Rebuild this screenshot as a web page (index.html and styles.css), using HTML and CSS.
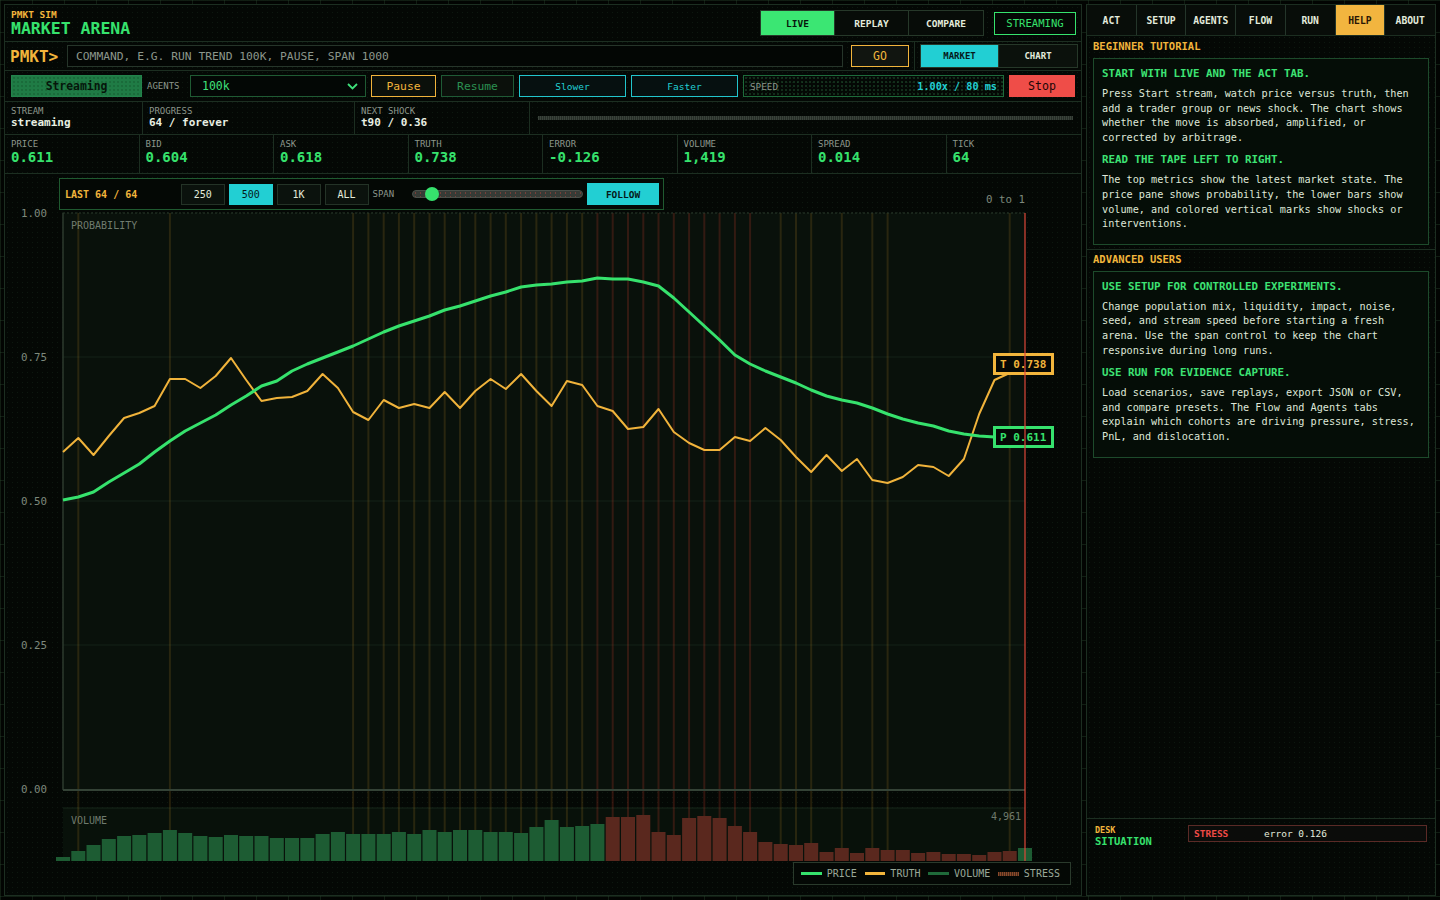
FILE: index.html
```html
<!DOCTYPE html>
<html lang="en">
<head>
  <meta charset="UTF-8"/>
  <meta name="viewport" content="width=device-width, initial-scale=1"/>
  <title>PMKT Sim - Market Arena</title>
  <link rel="stylesheet" href="styles.css">
</head>
<body>
<div class="app">

  <!-- Main arena -->
  <main class="arena">
    <header class="topbar">
      <div class="brand">
        <div class="brand-kicker">PMKT SIM</div>
        <div class="brand-title">MARKET ARENA</div>
      </div>
      <div class="topbar-right">
        <div class="seg mode-seg">
          <button class="on">LIVE</button>
          <button>REPLAY</button>
          <button>COMPARE</button>
        </div>
        <div class="status-pill">STREAMING</div>
      </div>
    </header>

    <!-- Command line -->
    <div class="cmd-row">
      <div class="cmd-main">
        <span class="prompt">PMKT&gt;</span>
        <input class="cmd-input" type="text" placeholder="COMMAND, E.G. RUN TREND 100K, PAUSE, SPAN 1000"/>
        <button class="btn-go">GO</button>
      </div>
      <div class="cmd-side">
        <div class="seg view-seg">
          <button class="on">MARKET</button>
          <button>CHART</button>
        </div>
      </div>
    </div>

    <!-- Run controls -->
    <div class="controls">
      <button class="btn-stream">Streaming</button>
      <span class="ctl-label">AGENTS</span>
      <div class="agent-select">
        <span>100k</span>
        <svg width="11" height="7" viewBox="0 0 11 7"><path d="M1 1l4.5 4.5L10 1" fill="none" stroke="#3fe07b" stroke-width="1.8"/></svg>
      </div>
      <button class="btn btn-pause">Pause</button>
      <button class="btn btn-resume">Resume</button>
      <button class="btn btn-speed">Slower</button>
      <button class="btn btn-speed">Faster</button>
      <div class="speed-box">
        <span class="ctl-label">SPEED</span>
        <span class="speed-val">1.00x / 80 ms</span>
      </div>
      <button class="btn btn-stop">Stop</button>
    </div>

    <!-- Stream status -->
    <div class="status-row">
      <div class="stat c-stream"><div class="stat-label">STREAM</div><div class="stat-val">streaming</div></div>
      <div class="stat c-progress"><div class="stat-label">PROGRESS</div><div class="stat-val">64 / forever</div></div>
      <div class="stat c-shock"><div class="stat-label">NEXT SHOCK</div><div class="stat-val">t90 / 0.36</div></div>
      <div class="stat c-bar"><div class="progress-track"></div></div>
    </div>

    <!-- Metrics -->
    <div class="metrics">
      <div class="metric"><div class="metric-label">PRICE</div><div class="metric-val">0.611</div></div>
      <div class="metric"><div class="metric-label">BID</div><div class="metric-val">0.604</div></div>
      <div class="metric"><div class="metric-label">ASK</div><div class="metric-val">0.618</div></div>
      <div class="metric"><div class="metric-label">TRUTH</div><div class="metric-val">0.738</div></div>
      <div class="metric"><div class="metric-label">ERROR</div><div class="metric-val">-0.126</div></div>
      <div class="metric"><div class="metric-label">VOLUME</div><div class="metric-val">1,419</div></div>
      <div class="metric"><div class="metric-label">SPREAD</div><div class="metric-val">0.014</div></div>
      <div class="metric"><div class="metric-label">TICK</div><div class="metric-val">64</div></div>
    </div>

    <!-- Chart -->
    <section class="chart">
      <svg id="chart" class="chart-svg" viewBox="5 174 1076 721" width="1076" height="721"></svg>

      <div class="chart-tools">
        <span class="tools-last">LAST 64 / 64</span>
        <button class="span-btn">250</button>
        <button class="span-btn on">500</button>
        <button class="span-btn">1K</button>
        <button class="span-btn">ALL</button>
        <span class="tools-label">SPAN</span>
        <div class="span-slider"><div class="span-track"></div><div class="span-thumb"></div></div>
        <button class="btn-follow">FOLLOW</button>
      </div>

      <div class="legend">
        <span class="sw sw-price"></span><span>PRICE</span>
        <span class="sw sw-truth"></span><span>TRUTH</span>
        <span class="sw sw-vol"></span><span>VOLUME</span>
        <span class="sw sw-stress"></span><span>STRESS</span>
      </div>
    </section>
  </main>

  <!-- Side panel -->
  <aside class="side">
    <nav class="tabs">
      <button>ACT</button>
      <button>SETUP</button>
      <button>AGENTS</button>
      <button>FLOW</button>
      <button>RUN</button>
      <button class="on">HELP</button>
      <button>ABOUT</button>
    </nav>

    <section class="help-sec">
      <h3 class="sec-title">BEGINNER TUTORIAL</h3>
      <div class="help-box">
        <h4>START WITH LIVE AND THE ACT TAB.</h4>
        <p>Press Start stream, watch price versus truth, then add a trader group or news shock. The chart shows whether the move is absorbed, amplified, or corrected by arbitrage.</p>
        <h4>READ THE TAPE LEFT TO RIGHT.</h4>
        <p>The top metrics show the latest market state. The price pane shows probability, the lower bars show volume, and colored vertical marks show shocks or interventions.</p>
      </div>
    </section>

    <section class="help-sec last">
      <h3 class="sec-title">ADVANCED USERS</h3>
      <div class="help-box">
        <h4>USE SETUP FOR CONTROLLED EXPERIMENTS.</h4>
        <p>Change population mix, liquidity, impact, noise, seed, and stream speed before starting a fresh arena. Use the span control to keep the chart responsive during long runs.</p>
        <h4>USE RUN FOR EVIDENCE CAPTURE.</h4>
        <p>Load scenarios, save replays, export JSON or CSV, and compare presets. The Flow and Agents tabs explain which cohorts are driving pressure, stress, PnL, and dislocation.</p>
      </div>
    </section>

    <div class="side-fill"></div>

    <div class="desk">
      <div class="desk-title">
        <div class="desk-kicker">DESK</div>
        <div class="desk-name">SITUATION</div>
      </div>
      <div class="desk-alert">
        <span class="alert-tag">STRESS</span>
        <span class="alert-msg">error 0.126</span>
      </div>
    </div>
  </aside>
</div>

<script>
  // chart data, in page pixels (y of price/truth, bar heights)
  const priceY = [500,497,492,482,473,464,452,441,431,423,415,405,396,386,381,371,
                  364,358,352,346,339,332,326,321,316,310,306,301,296,292,287,285,
                  284,282,281,278,279,279,282,286,298,312,326,340,355,364,371,377,
                  383,390,396,400,403,408,414,419,423,426,431,434,436,437,437,437];
  const truthY = [452,438,455,436,418,413,406,379,379,388,376,358,380,401,398,397,
                  391,374,388,412,420,400,408,404,408,392,408,391,379,389,374,391,
                  406,381,385,406,411,429,427,409,432,443,450,450,437,441,428,440,
                  457,472,455,471,459,480,483,477,465,467,476,459,414,380,373,364];
  const volH = [4,10,16,22,25,26,28,31,28,25,24,26,25,25,23,23,
                23,27,29,27,27,27,29,27,31,29,31,31,29,29,28,34,
                41,34,35,37,44,44,46,29,26,43,45,43,35,29,19,17,
                16,18,9,13,8,13,11,11,8,9,7,7,6,9,10,13];
  const shocks = [1,7,19,20,21,22,23,24,25,26,27,28,29,30,31,32,33,34,35,36,
                  37,38,39,40,41,42,43,44,45,47,48,49,51,53,54,62];

  const X0 = 63, X1 = 1025, TOP = 213, BASE = 789, VBASE = 861;
  const step = (X1 - X0) / 63;
  const xAt = i => +(X0 + i * step).toFixed(1);

  let g = "";
  g += `<rect x="${X0}" y="${TOP}" width="${X1 - X0}" height="${BASE - TOP + 1}" fill="#09110b"/>`;
  g += `<rect x="${X0}" y="808" width="${X1 - X0}" height="53" fill="#08110a"/>`;
  g += `<line x1="${X0}" y1="808" x2="${X1}" y2="808" stroke="#16261a"/>`;

  // y axis + grid
  [[1, "1.00"], [0.75, "0.75"], [0.5, "0.50"], [0.25, "0.25"], [0, "0.00"]].forEach(([v, t]) => {
    const y = BASE - v * 576;
    if (v > 0 && v < 1) g += `<line x1="${X0}" y1="${y}" x2="${X1}" y2="${y}" stroke="#142218"/>`;
    g += `<text class="axis-txt" x="47" y="${y + 4}" text-anchor="end">${t}</text>`;
  });
  g += `<text class="axis-txt" x="1025" y="203" text-anchor="end">0 to 1</text>`;
  g += `<text class="pane-txt" x="71" y="229">PROBABILITY</text>`;
  g += `<text class="pane-txt" x="71" y="824">VOLUME</text>`;
  g += `<text class="pane-txt" x="1021" y="820" text-anchor="end">4,961</text>`;

  // shock / intervention marks
  shocks.forEach(i => {
    const col = (i >= 35 && i <= 45) ? "rgba(190,60,40,0.24)" : "rgba(190,140,40,0.18)";
    g += `<line x1="${xAt(i)}" y1="${TOP}" x2="${xAt(i)}" y2="${VBASE}" stroke="${col}" stroke-width="2"/>`;
  });

  // volume bars
  volH.forEach((h, i) => {
    const fill = (i >= 36 && i <= 62) ? "#5a281e" : "#1d5c33";
    g += `<rect x="${xAt(i) - 7}" y="${VBASE - h}" width="14" height="${h}" fill="${fill}"/>`;
  });

  // frame
  g += `<line x1="${X0}" y1="${TOP}" x2="${X1}" y2="${TOP}" stroke="#2a3a2c" stroke-dasharray="2 2"/>`;
  g += `<line x1="${X0}" y1="${TOP}" x2="${X0}" y2="${BASE + 1}" stroke="#2c3a2e" stroke-width="1.5"/>`;
  g += `<line x1="${X0}" y1="${BASE + 1}" x2="${X1}" y2="${BASE + 1}" stroke="#344236" stroke-width="2"/>`;

  // lines
  const pts = ys => ys.map((y, i) => `${xAt(i)},${y}`).join(" ");
  g += `<polyline points="${pts(truthY)}" fill="none" stroke="#f0b33b" stroke-width="2" stroke-linejoin="round"/>`;
  g += `<polyline points="${pts(priceY)}" fill="none" stroke="#36e26d" stroke-width="3" stroke-linejoin="round"/>`;

  // last value tags
  g += `<rect x="994.5" y="354.5" width="58" height="19" fill="#050805" stroke="#f2b53c" stroke-width="3"/>`;
  g += `<text class="tag-txt" x="1000" y="368" fill="#f2b53c">T 0.738</text>`;
  g += `<rect x="994.5" y="427.5" width="58" height="19" fill="#050805" stroke="#36e26d" stroke-width="3"/>`;
  g += `<text class="tag-txt" x="1000" y="441" fill="#36e26d">P 0.611</text>`;

  // cursor
  g += `<line x1="${X1}" y1="${TOP}" x2="${X1}" y2="${VBASE}" stroke="#e0483a" stroke-width="1.2"/>`;

  document.getElementById("chart").innerHTML = g;
</script>
</body>
</html>
```

FILE: styles.css
```css
* { box-sizing: border-box; }
html, body { margin: 0; height: 100%; }
body {
  font-family: "DejaVu Sans Mono", "Liberation Mono", monospace;
  color: #dbe5d4;
  background-color: #020402;
  background-image:
    linear-gradient(90deg, rgba(45,75,50,0.35) 1px, transparent 1px),
    linear-gradient(rgba(45,75,50,0.35) 1px, transparent 1px);
  background-size: 32px 32px;
  overflow: hidden;
}
button { font-family: inherit; cursor: pointer; }

.app {
  display: grid;
  grid-template-columns: 1078px 350px;
  gap: 4px;
  padding: 4px;
  height: 900px;
}

/* shared panel look */
.arena, .side {
  border: 1px solid #1c2e21;
  background-color: #040805;
  background-image: radial-gradient(rgba(70,120,80,0.14) 0.7px, transparent 0.9px);
  background-size: 5px 5px;
  display: flex;
  flex-direction: column;
  height: 892px;
}

/* Top bar */
.topbar {
  height: 37px;
  border-bottom: 1px solid #1c2e21;
  display: flex;
  align-items: center;
  justify-content: space-between;
  padding: 0 5px 0 6px;
}
.brand-kicker { font-size: 9.5px; font-weight: bold; color: #f2b53c; line-height: 10px; }
.brand-title { font-size: 16.5px; font-weight: bold; color: #36e26d; line-height: 17px; }
.topbar-right { display: flex; align-items: center; gap: 10px; }

.seg { display: flex; border: 1px solid #263829; background: #070c08; }
.seg button {
  border: 0; border-right: 1px solid #263829;
  background: transparent; color: #e3ebdc;
  font-weight: bold;
}
.seg button:last-child { border-right: 0; }
.mode-seg button { width: 74px; height: 24px; font-size: 9.5px; }
.mode-seg button.on { background: #3be673; color: #07150b; }
.status-pill {
  width: 82px; height: 23px;
  border: 1px solid #36e26d; color: #36e26d;
  font-size: 10.6px;
  display: flex; align-items: center; justify-content: center;
  background: #040805;
}

/* Command row */
.cmd-row {
  height: 29px;
  border-bottom: 1px solid #1c2e21;
  display: flex;
}
.cmd-main {
  flex: 1;
  display: flex; align-items: center;
  padding-left: 5px;
}
.prompt { font-size: 16px; font-weight: bold; color: #f2b53c; width: 57px; }
.cmd-input {
  width: 776px; height: 22px;
  background: #030604; border: 1px solid #26352a;
  color: #dbe5d4; padding: 0 8px;
  font-family: inherit; font-size: 11.3px;
}
.cmd-input::placeholder { color: #8c968b; }
.btn-go {
  margin-left: 8px;
  width: 58px; height: 22px;
  border: 1px solid #f2b53c; background: #111510;
  color: #f2b53c; font-size: 11.5px;
}
.cmd-side {
  width: 167px;
  border-left: 1px solid #1c2e21;
  display: flex; align-items: center;
  padding-left: 5px;
}
.view-seg button { width: 78px; height: 22px; font-size: 9px; background: #0b110c; }
.view-seg button.on { background: #22cfd3; color: #06191a; }

/* Controls */
.controls {
  height: 31px;
  border-bottom: 1px solid #1c2e21;
  display: flex; align-items: center; gap: 5px;
  padding-left: 6px;
}
.controls > * { height: 22px; flex-shrink: 0; }
.btn { background: #0b100b; border: 1px solid; font-size: 11.3px; }
.btn-stream {
  width: 131px;
  border: 1px solid #23834b;
  background-color: #1f7b45;
  background-image: radial-gradient(rgba(0,30,10,0.18) 0.7px, transparent 0.9px);
  background-size: 4px 4px;
  color: #06160b; font-size: 11.4px; font-weight: bold;
}
.ctl-label { font-size: 9px; color: #8c968b; display: flex; align-items: center; }
.controls > .ctl-label { width: 38px; }
.agent-select {
  width: 176px;
  border: 1px solid #1f5a33; background: #030705;
  color: #3fe07b; font-size: 11.5px;
  display: flex; align-items: center; justify-content: space-between;
  padding: 0 7px 0 11px;
}
.btn-pause { width: 65px; border-color: #f0b33b; color: #f2b53c; }
.btn-resume { width: 73px; border-color: #1f5a35; color: #2c9152; }
.btn-speed { width: 107px; border-color: #22c5cc; color: #22cfd3; font-size: 9.5px; background: #061010; }
.speed-box {
  width: 261px;
  border: 1px solid #1d6a3a;
  display: flex; align-items: center; justify-content: space-between;
  padding: 0 6px;
  background-image: radial-gradient(rgba(60,160,90,0.26) 0.7px, transparent 0.9px);
  background-size: 4px 4px;
}
.speed-box .ctl-label { font-size: 9.3px; }
.speed-val { color: #22cfd3; font-size: 10.2px; font-weight: bold; }
.btn-stop { width: 66px; border: 0; background: #ef4d48; color: #1c0606; font-size: 11.6px; }

/* Status row */
.status-row {
  height: 33px;
  border-bottom: 1px solid #1c2e21;
  display: flex;
}
.stat { padding: 4px 6px 0; border-right: 1px solid #1c2e21; }
.c-stream { width: 138px; }
.c-progress { width: 212px; }
.c-shock { width: 175px; }
.c-bar { flex: 1; border-right: 0; display: flex; align-items: center; padding: 0 8px; }
.stat-label { font-size: 9px; line-height: 10px; color: #8c968b; }
.stat-val { font-size: 11px; line-height: 13px; font-weight: bold; color: #e8efe2; }
.progress-track {
  width: 100%; height: 4px;
  background: repeating-linear-gradient(90deg, #3a433b 0 1px, #262d27 1px 2px);
}

/* Metrics */
.metrics {
  height: 39px;
  border-bottom: 1px solid #1c2e21;
  display: grid;
  grid-template-columns: repeat(8, 1fr);
}
.metric { padding: 4px 6px 0; border-right: 1px solid #1c2e21; }
.metric:last-child { border-right: 0; }
.metric-label { font-size: 9px; line-height: 10px; color: #8c968b; }
.metric-val { font-size: 14px; line-height: 16px; font-weight: bold; color: #36e26d; }

/* Chart */
.chart { flex: 1; position: relative; overflow: hidden; }
.chart-svg { display: block; }
.axis-txt { font-family: "DejaVu Sans Mono", monospace; font-size: 10.8px; fill: #7d897c; }
.pane-txt { font-family: "DejaVu Sans Mono", monospace; font-size: 10px; fill: #6f7b6e; }
.tag-txt { font-family: "DejaVu Sans Mono", monospace; font-size: 11px; font-weight: bold; }

.chart-tools {
  position: absolute; left: 54px; top: 4px;
  width: 605px; height: 32px;
  border: 1px solid #1f5a30;
  background: #040805;
  display: flex; align-items: center; gap: 4px;
  padding: 0 4px 0 5px;
}
.tools-last { width: 112px; font-size: 10px; font-weight: bold; color: #f2b53c; }
.span-btn {
  width: 44px; height: 21px;
  border: 1px solid #243327; background: #0b120d;
  color: #e3ebdc; font-size: 10px;
}
.span-btn.on { background: #22cfd3; border-color: #22cfd3; color: #06191a; }
.tools-label { font-size: 9px; color: #8c968b; width: 36px; }
.span-slider { position: relative; width: 171px; height: 14px; display: flex; align-items: center; }
.span-track {
  width: 100%; height: 8px; border-radius: 4px;
  background-color: #363b36;
  background-image: radial-gradient(rgba(200,70,60,0.5) 0.6px, transparent 0.8px);
  background-size: 5px 4px;
  border: 1px solid #4a504a;
}
.span-thumb {
  position: absolute; left: 13px; top: 0;
  width: 14px; height: 14px; border-radius: 50%;
  background: #36e26d;
}
.btn-follow {
  width: 72px; height: 22px;
  border: 0; background: #22cfd3;
  color: #06191a; font-size: 9.5px; font-weight: bold;
}

.legend {
  position: absolute; right: 10px; bottom: 10px;
  width: 278px; height: 23px;
  border: 1px solid #2a3a2c; background: #040805;
  display: flex; align-items: center; gap: 5px;
  padding: 0 7px;
  font-size: 10px; color: #9aa899;
}
.legend span:not(.sw) { margin-right: 3px; }
.sw { width: 22px; height: 3px; }
.sw-price { background: #36e26d; }
.sw-truth { background: #f2b53c; }
.sw-vol { background: #1f6a3a; }
.sw-stress { height: 4px; background: repeating-linear-gradient(90deg, #8a4a2a 0 1px, #4a2a1a 1px 2px); }

/* Side panel */
.tabs {
  height: 31px;
  border-bottom: 1px solid #1c2e21;
  display: grid;
  grid-template-columns: repeat(7, 1fr);
}
.tabs button {
  border: 0; border-right: 1px solid #24352a;
  background: #080d09; color: #e3ebdc;
  font-size: 9.7px; font-weight: bold;
}
.tabs button:last-child { border-right: 0; }
.tabs button.on { background: #f2b53f; color: #2a1705; }

.help-sec { padding: 4px 6px 4px 6px; border-bottom: 1px solid #1c2e21; }
.help-sec.last { border-bottom: 0; padding-top: 3px; }
.sec-title {
  margin: 0 0 6px;
  font-size: 10.5px; line-height: 12px;
  color: #f2b53c; font-weight: bold;
}
.help-box {
  border: 1px solid #1d4a2b;
  background: #050d07;
  padding: 8px 8px 12px;
}
.help-box h4 {
  margin: 0 0 6px;
  font-size: 10.8px; line-height: 14px;
  color: #3de374; font-weight: bold;
}
.help-box p {
  margin: 0 0 8px;
  font-size: 10.2px; line-height: 14.6px;
  color: #dfe7d8;
}
.help-box p:last-child { margin-bottom: 0; }

.side-fill { flex: 1; }
.desk {
  height: 77px;
  border-top: 1px solid #1c2e21;
  display: flex; align-items: flex-start;
  padding: 6px 8px 0;
}
.desk-title { width: 93px; }
.desk-kicker { font-size: 8.5px; line-height: 10px; font-weight: bold; color: #f2b53c; }
.desk-name { font-size: 10.5px; line-height: 12px; font-weight: bold; color: #36e26d; }
.desk-alert {
  width: 239px; height: 17px;
  border: 1px solid #5a2a26; background: #0b0c0a;
  display: flex; align-items: center;
  padding: 0 5px;
  font-size: 9.5px;
}
.alert-tag { color: #ee4a45; font-weight: bold; width: 70px; }
.alert-msg { color: #e3ebdc; }
```
